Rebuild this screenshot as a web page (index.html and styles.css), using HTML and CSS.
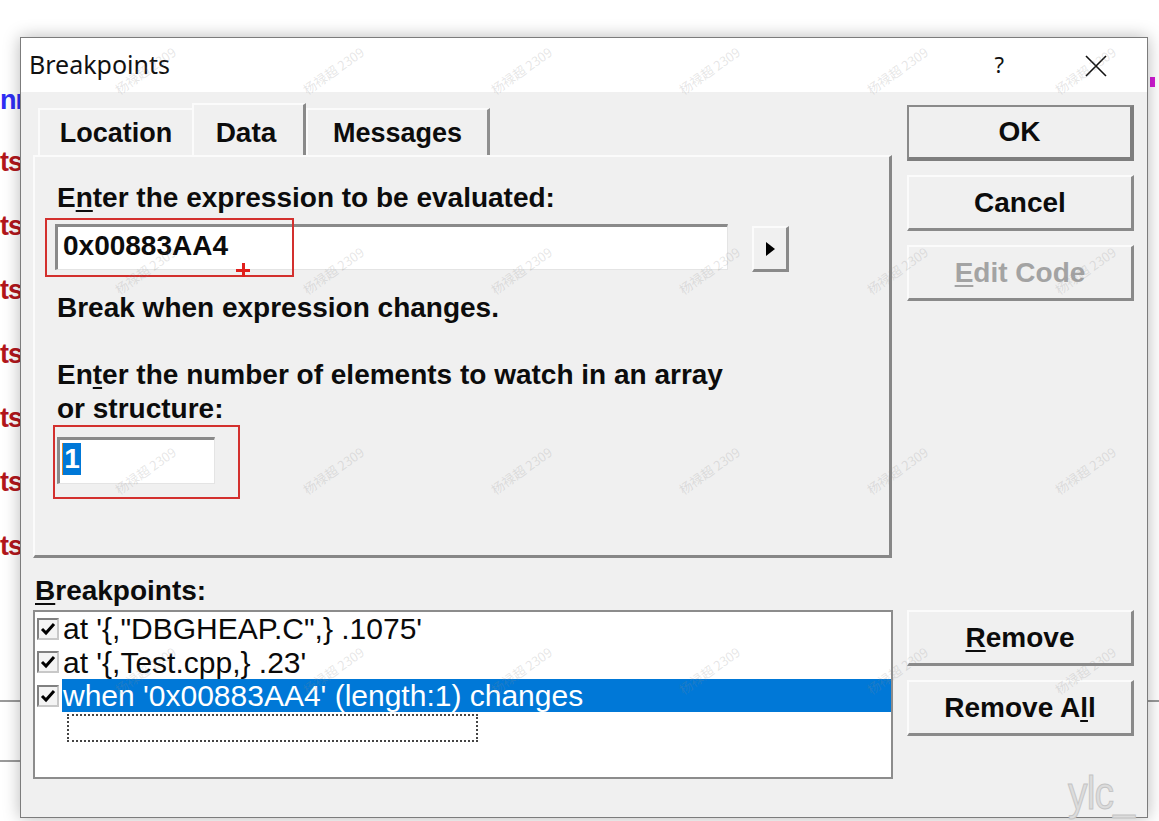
FILE: index.html
```html
<!DOCTYPE html>
<html>
<head>
<meta charset="utf-8">
<title>Breakpoints</title>
<link rel="stylesheet" href="styles.css">
</head>
<body>
<div class="screen">
  <div class="bg-left">
    <div class="code code-blue">nr</div>
    <div class="code code-red">ts</div>
    <div class="code code-red">ts</div>
    <div class="code code-red">ts</div>
    <div class="code code-red">ts</div>
    <div class="code code-red">ts</div>
    <div class="code code-red">ts</div>
    <div class="code code-red">ts</div>
    <div class="bg-line first"></div>
    <div class="bg-line second"></div>
  </div>

  <div class="dialog">
    <div class="titlebar">
      <span class="title">Breakpoints</span>
      <span class="help">?</span>
      <svg class="close" width="22" height="22" viewBox="0 0 22 22"><path d="M1 1 L21 21 M21 1 L1 21" stroke="#111" stroke-width="1.6" fill="none"/></svg>
    </div>

    <div class="body">
      <div class="leftcol">
        <div class="tabs">
          <div class="tab tab-location">Location</div>
          <div class="tab tab-data selected">Data</div>
          <div class="tab tab-messages">Messages</div>
        </div>

        <div class="panel">
          <div class="label">E<u>n</u>ter the expression to be evaluated:</div>
          <div class="expr-row">
            <div class="edit edit-expr">0x00883AA4</div>
            <div class="arrow-btn">
              <svg width="9" height="14" viewBox="0 0 9 14"><path d="M0 0 L9 7 L0 14 Z" fill="#000"/></svg>
            </div>
          </div>
          <div class="label label-break">Break when expression changes.</div>
          <div class="label label-count">En<u>t</u>er the number of elements to watch in an array<br>or structure:</div>
          <div class="edit edit-count"><span class="sel">1</span></div>

          <div class="mark mark-expr"></div>
          <div class="mark mark-count"></div>
          <div class="cross"></div>
        </div>

        <div class="bp-label"><u>B</u>reakpoints:</div>

        <div class="list">
          <div class="row">
            <span class="check"><svg width="18" height="18" viewBox="0 0 18 18"><path d="M3 9 L7 13 L15 4" stroke="#000" stroke-width="3" fill="none"/></svg></span>
            <span class="item">at '{,"DBGHEAP.C",} .1075'</span>
          </div>
          <div class="row row2">
            <span class="check"><svg width="18" height="18" viewBox="0 0 18 18"><path d="M3 9 L7 13 L15 4" stroke="#000" stroke-width="3" fill="none"/></svg></span>
            <span class="item">at '{,Test.cpp,} .23'</span>
          </div>
          <div class="row">
            <span class="check"><svg width="18" height="18" viewBox="0 0 18 18"><path d="M3 9 L7 13 L15 4" stroke="#000" stroke-width="3" fill="none"/></svg></span>
            <span class="item selected-item">when '0x00883AA4' (length:1) changes</span>
          </div>
          <div class="focus-rect"></div>
        </div>
      </div>

      <div class="rightcol">
        <div class="btn default">OK</div>
        <div class="btn">Cancel</div>
        <div class="btn disabled"><u>E</u>dit Code</div>
        <div class="btn btn-remove"><u>R</u>emove</div>
        <div class="btn">Remove A<u>l</u>l</div>
      </div>
    </div>
  </div>

  <div class="bg-right">
    <div class="magenta"></div>
    <div class="bg-line right-line"></div>
  </div>

  <div class="watermarks">
    <div class="wm-grid">
      <span>杨禄超 2309</span><span>杨禄超 2309</span><span>杨禄超 2309</span><span>杨禄超 2309</span><span>杨禄超 2309</span><span>杨禄超 2309</span>
      <span>杨禄超 2309</span><span>杨禄超 2309</span><span>杨禄超 2309</span><span>杨禄超 2309</span><span>杨禄超 2309</span><span>杨禄超 2309</span>
      <span>杨禄超 2309</span><span>杨禄超 2309</span><span>杨禄超 2309</span><span>杨禄超 2309</span><span>杨禄超 2309</span><span>杨禄超 2309</span>
      <span>杨禄超 2309</span><span>杨禄超 2309</span><span>杨禄超 2309</span><span>杨禄超 2309</span><span>杨禄超 2309</span><span>杨禄超 2309</span>
    </div>
  </div>
  <div class="ylc">ylc_</div>
</div>
</body>
</html>
```

FILE: styles.css
```css
* { box-sizing: border-box; }

html, body {
  margin: 0;
  padding: 0;
  background: #ffffff;
  width: 1159px;
  height: 821px;
  overflow: hidden;
}

.screen {
  position: relative;
  display: flex;
  width: 1159px;
  height: 821px;
  overflow: hidden;
  font-family: "Liberation Sans", Arial, sans-serif;
}

/* background editor fragments (partly covered by the dialog) */
.bg-left {
  width: 20px;
  flex: none;
  display: flex;
  flex-direction: column;
}
.code {
  font-family: "Liberation Sans", sans-serif;
  font-weight: bold;
  font-size: 27px;
  line-height: 30px;
  height: 30px;
  white-space: nowrap;
  letter-spacing: -1px;
}
.code-blue { color: #2f2ff5; margin-top: 85px; }
.code-red { color: #b3161c; margin-top: 34px; }
.code-red:nth-child(2) { margin-top: 32px; }
.bg-line { height: 2px; background: #9a9a9a; width: 20px; }
.bg-line.first { margin-top: 139px; }
.bg-line.second { margin-top: 58px; }

.bg-right {
  width: 11px;
  flex: none;
  display: flex;
  flex-direction: column;
}
.magenta { width: 5px; height: 10px; margin-top: 77px; margin-left: 2px; background: #d21bd6; }
.bg-line.right-line { width: 11px; margin-top: 613px; }

/* dialog */
.dialog {
  position: relative;
  z-index: 1;
  width: 1128px;
  height: 781px;
  margin-top: 37px;
  flex: none;
  border: 1px solid #7c7c7c;
  background: #f0f0f0;
  box-shadow: 0 0 16px rgba(0,0,0,0.28);
  display: flex;
  flex-direction: column;
}

.titlebar {
  height: 54px;
  background: #ffffff;
  display: flex;
  align-items: center;
  padding-left: 8px;
  flex: none;
}
.title {
  font-family: "Noto Sans", "Open Sans", sans-serif;
  font-size: 25px;
  color: #111;
  margin-top: -2px;
}
.help {
  font-family: "Noto Sans", sans-serif;
  font-size: 22px;
  color: #111;
  margin-left: auto;
  margin-top: -2px;
}
.close {
  margin-left: 81px;
  margin-right: 40px;
  margin-top: 1px;
}

.body {
  display: flex;
  padding: 0 13px 0 12px;
  flex: 1;
  font-weight: bold;
  font-size: 28px;
  color: #0c0c0c;
}

.leftcol {
  width: 860px;
  margin-top: 11px;
  display: flex;
  flex-direction: column;
}

/* tabs */
.tabs {
  height: 52px;
  display: flex;
  align-items: flex-end;
  padding-left: 5px;
}
.tab {
  height: 47px;
  line-height: 32px;
  padding-bottom: 6px;
  display: flex;
  align-items: flex-end;
  justify-content: center;
  border-top: 2px solid #fbfbfb;
  border-left: 2px solid #fbfbfb;
}
.tab-location { width: 154px; font-size: 27px; }
.tab-data { width: 114px; height: 52px; border-right: 3px solid #8a8a8a; padding-right: 5px; }
.tab-messages { width: 184px; border-right: 3px solid #8f8f8f; font-size: 27px; }

/* panel */
.panel {
  position: relative;
  height: 403px;
  width: 859px;
  border-top: 2px solid #fbfbfb;
  border-left: 2px solid #fbfbfb;
  border-right: 3px solid #878787;
  border-bottom: 3px solid #878787;
  padding: 25px 0 0 20px;
}
.label {
  margin-left: 2px;
  line-height: 32px;
  white-space: nowrap;
}
.label u, .bp-label u, .btn u { text-decoration-thickness: 2px; text-underline-offset: 3px; }
.expr-row {
  display: flex;
  align-items: flex-start;
  margin-top: 10px;
}
.edit {
  background: #ffffff;
  border-top: 3px solid #8a8a8a;
  border-left: 3px solid #8a8a8a;
  border-right: 1px solid #e4e4e4;
  border-bottom: 1px solid #e4e4e4;
}
.edit-expr {
  width: 673px;
  height: 46px;
  padding: 1px 0 0 5px;
  line-height: 36px;
}
.arrow-btn {
  width: 37px;
  height: 46px;
  margin-left: 24px;
  margin-top: 2px;
  border-top: 2px solid #fbfbfb;
  border-left: 2px solid #fbfbfb;
  border-right: 3px solid #8a8a8a;
  border-bottom: 3px solid #8a8a8a;
  display: flex;
  align-items: center;
  justify-content: center;
}
.label-break { margin-top: 20px; }
.label-count { margin-top: 34px; line-height: 34px; }
.edit-count {
  width: 158px;
  height: 47px;
  margin-top: 11px;
  margin-left: 2px;
  padding: 3px 0 0 2px;
}
.sel {
  display: inline-block;
  background: #0078d7;
  color: #fff;
  width: 19px;
  height: 32px;
  line-height: 32px;
  text-align: center;
  border-left: 1px solid #e08a30;
  font-weight: bold;
}

.mark {
  position: absolute;
  border: 2px solid #d3302e;
}
.mark-expr { left: 10px; top: 61px; width: 249px; height: 59px; }
.mark-count { left: 18px; top: 268px; width: 187px; height: 74px; }
.cross {
  position: absolute;
  left: 201px;
  top: 106px;
  width: 14px;
  height: 14px;
  background:
    linear-gradient(#e0201c, #e0201c) center / 14px 3px no-repeat,
    linear-gradient(#e0201c, #e0201c) center / 3px 14px no-repeat;
}

.bp-label {
  margin-top: 17px;
  margin-left: 2px;
  line-height: 32px;
}

/* list */
.list {
  margin-top: 3px;
  height: 169px;
  width: 860px;
  background: #ffffff;
  border: 2px solid #8c8c8c;
  font-weight: normal;
  font-size: 30px;
  color: #0a0a0a;
}
.row {
  height: 33px;
  display: flex;
  align-items: center;
}
.row2 { height: 34px; }
.check {
  width: 22px;
  height: 22px;
  margin-left: 2px;
  border-top: 2px solid #808080;
  border-left: 2px solid #808080;
  border-right: 2px solid #c8c8c8;
  border-bottom: 2px solid #c8c8c8;
  background: #f4f4f4;
  display: flex;
  align-items: center;
  justify-content: center;
  flex: none;
}
.item {
  margin-left: 3px;
  padding-left: 1px;
  white-space: nowrap;
  line-height: 33px;
}
.selected-item {
  flex: 1;
  background: #0078d7;
  color: #ffffff;
  height: 33px;
}
.focus-rect {
  margin-top: 2px;
  margin-left: 32px;
  width: 411px;
  height: 28px;
  border: 2px dotted #444;
}

/* right buttons */
.rightcol {
  width: 227px;
  margin-left: 14px;
  margin-top: 13px;
  display: flex;
  flex-direction: column;
  gap: 14px;
}
.btn {
  height: 56px;
  display: flex;
  align-items: center;
  justify-content: center;
  border-top: 2px solid #fbfbfb;
  border-left: 2px solid #fbfbfb;
  border-right: 3px solid #8a8a8a;
  border-bottom: 3px solid #8a8a8a;
  background: #f0f0f0;
  line-height: 32px;
}
.btn.default {
  border-top: 2px solid #8a8a8a;
  border-left: 2px solid #8a8a8a;
  border-right: 4px solid #7e7e7e;
  border-bottom: 4px solid #7e7e7e;
}
.btn.disabled { color: #a3a3a3; }
.btn-remove { margin-top: 295px; }

/* overlays */
.watermarks {
  position: absolute;
  z-index: 2;
  left: 51px;
  top: 0;
  width: 1108px;
  height: 821px;
  overflow: hidden;
  pointer-events: none;
}
.wm-grid {
  display: grid;
  grid-template-columns: repeat(6, 188px);
  grid-auto-rows: 200px;
  margin-top: -30px;
  width: 1128px;
}
.wm-grid span {
  display: flex;
  align-items: center;
  justify-content: center;
  transform: rotate(-35deg);
  font-family: "Noto Sans CJK SC", "Noto Sans", sans-serif;
  font-size: 13px;
  color: rgba(140,140,140,0.22);
  white-space: nowrap;
}
.ylc {
  position: absolute;
  z-index: 2;
  left: 1068px;
  top: 768px;
  font-family: "Liberation Sans", sans-serif;
  font-size: 46px;
  line-height: 50px;
  color: #dcdcdc;
  -webkit-text-stroke: 1px #c4c4c4;
  transform: scaleX(0.85);
  transform-origin: left top;
  letter-spacing: -1px;
}
```
